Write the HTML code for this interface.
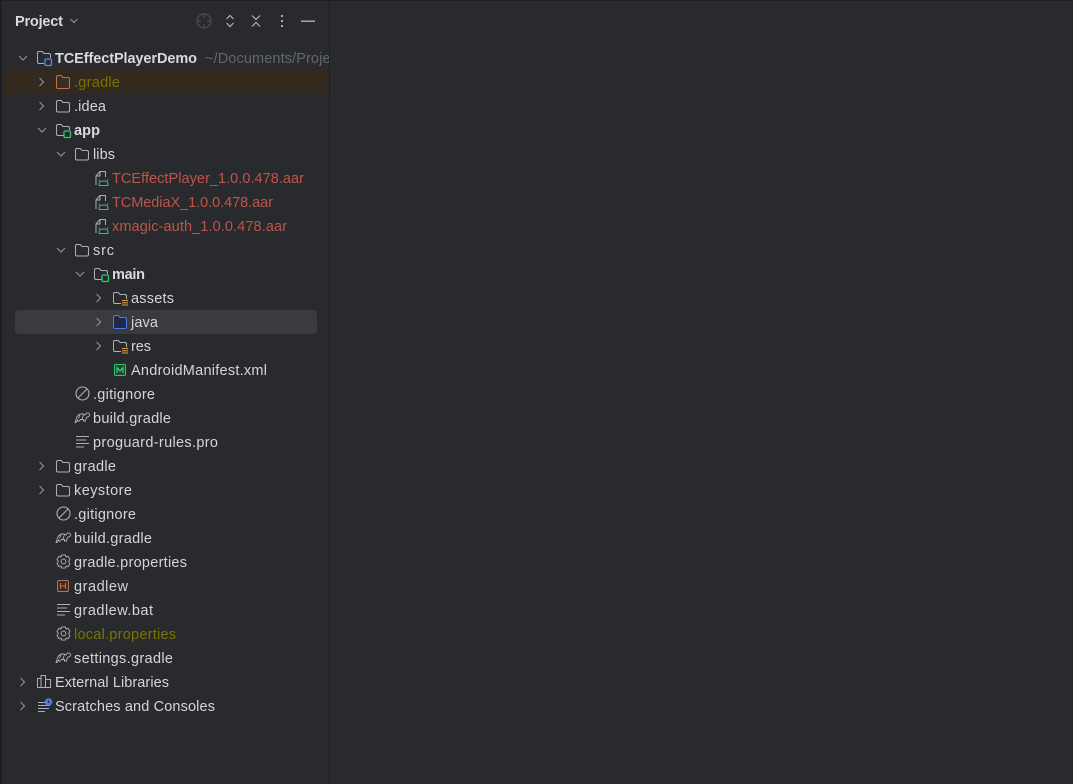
<!DOCTYPE html>
<html>
<head>
<meta charset="utf-8">
<style>
html,body{margin:0;padding:0;background:#292a2d;width:1073px;height:784px;overflow:hidden}
svg{display:block}
text{font-family:"Liberation Sans",sans-serif;font-size:14.5px;fill:#d3d5da}
.b{font-weight:bold;fill:#d8dade}
.r{fill:#bd5549}
.o{fill:#767600}
.g{fill:#64676d}
</style>
</head>
<body>
<svg width="1073" height="784" viewBox="0 0 1073 784" xmlns="http://www.w3.org/2000/svg">
<defs>
<clipPath id="cp"><rect x="0" y="0" width="329" height="784"/></clipPath>
<path id="cr" d="M-2.5 -4 L1.500 0 L-2.500 4" fill="none" stroke="#8b8e94" stroke-width="1.200"/>
<path id="cd" d="M-4 -2 L0 2 L4 -2" fill="none" stroke="#8b8e94" stroke-width="1.200"/>
<path id="f" d="M.5 2 Q.5 .5 2 .5 H5.200 L7 2.500 H12 Q13.500 2.500 13.500 4 V10.500 Q13.500 12 12 12 H2 Q.5 12 .5 10.500 Z" fill="none" stroke="#aeb0b6"/>
<g id="fm">
<path d="M7.500 11.500 H2 Q.5 11.500 .5 10 V2 Q.5 .5 2 .5 H5.200 L7 2.500 H12 Q13.500 2.500 13.500 4 V6" fill="none" stroke="#aeb0b6"/>
<rect x="8" y="7" width="6.500" height="6.500" rx="1.300" fill="none" stroke="#2fc66b" stroke-width="1.300"/>
</g>
<g id="fr">
<path d="M8 11.500 H2 Q.5 11.500 .5 10 V2 Q.5 .5 2 .5 H5.200 L7 2.500 H12 Q13.500 2.500 13.500 4 V7" fill="none" stroke="#aeb0b6"/>
<path d="M9 8.500 H15 M9 10.800 H15 M9 13 H15" stroke="#d9a343" stroke-width="1.100"/>
</g>
<g id="aar">
<path d="M1.500 13.500 H1 V5 L5 .5 H10.500 V6" fill="none" stroke="#aeb0b6"/>
<path d="M5 1 V5 H1" fill="none" stroke="#aeb0b6"/>
<path d="M4 14.500 V13 Q4 10 8.500 10 Q13 10 13 13 V14.500 Z M5 10 L4 8.500 M12 10 L13 8.500" fill="none" stroke="#3fb977" stroke-width="1"/>
</g>
<g id="ign">
<circle cx="7.500" cy="7.500" r="6.500" fill="none" stroke="#aeb0b6" stroke-width="1.100"/>
<path d="M3 12 L12 3" stroke="#aeb0b6" stroke-width="1.100"/>
</g>
<path id="el" d="M1 12.500 L2.500 8 Q3.500 4.500 7 4 Q9.500 3.500 11 5 L12.500 3 Q15.500 2.500 15.500 4.500 Q15.500 7 13 7 L12 9 L11.500 11 H9.500 L9.500 9.500 H6.500 L5.500 11 H3.500 L3.800 9.500 L2 12.500 Z M6 4.500 L4.500 8.500 M9.500 4.500 L8 9" fill="none" stroke="#aeb0b6" stroke-width=".9"/>
<g id="lines"><path d="M1 2.500 H14 M1 6 H11 M1 9.500 H14 M1 13 H9" stroke="#aeb0b6" stroke-width="1"/></g>
<g id="gear">
<path d="M5.500 1 H9.500 L10 3 L12 2.300 L14 5.500 L12.600 7.500 L14 9.500 L12 12.700 L10 12 L9.500 14 H5.500 L5 12 L3 12.700 L1 9.500 L2.400 7.500 L1 5.500 L3 2.300 L5 3 Z" fill="none" stroke="#a6a8ae" stroke-linejoin="round"/>
<circle cx="7.500" cy="7.500" r="2.400" fill="none" stroke="#a6a8ae"/>
</g>
</defs>

<rect width="1073" height="784" fill="#292a2d"/>
<rect x="0" y="0" width="1073" height="1" fill="#1d1e20"/>
<rect x="0" y="0" width="2" height="784" fill="#1d1e20"/>
<rect x="329" y="0" width="1" height="784" fill="#1d1e20"/>

<rect x="3" y="70" width="326" height="24" fill="#33291e"/>
<rect x="15" y="310" width="302" height="24" rx="4" fill="#393b40"/>

<g clip-path="url(#cp)">
<text x="15" y="26" class="b" textLength="48" lengthAdjust="spacing">Project</text>
<path d="M70.500 19 L74 22.500 L77.500 19" fill="none" stroke="#8b8e94" stroke-width="1.200"/>

<g fill="none" stroke="#4b4d52" stroke-width="1.200">
<circle cx="204" cy="21" r="7"/>
<path d="M204 14 V18 M204 24 V28 M197 21 H201 M207 21 H211"/>
</g>
<path d="M226.500 19 L230 15.500 L233.500 19 M226.500 23 L230 26.500 L233.500 23" fill="none" stroke="#aeb0b6" stroke-width="1.200"/>
<path d="M252 15.500 L256 19.500 L260 15.500 M252 26.500 L256 22.500 L260 26.500" fill="none" stroke="#aeb0b6" stroke-width="1.200"/>
<g fill="#aeb0b6"><rect x="281" y="15" width="2" height="2"/><rect x="281" y="20" width="2" height="2"/><rect x="281" y="25" width="2" height="2"/></g>
<rect x="301" y="20.500" width="14" height="1.400" fill="#aeb0b6"/>

<!-- row 0 -->
<use href="#cd" x="23" y="58"/>
<path d="M44 63.500 H39 Q37.500 63.500 37.500 62 V53 Q37.500 51.500 39 51.500 H42.200 L44 53.500 H49 Q50.500 53.500 50.500 55 V58" fill="none" stroke="#aeb0b6"/>
<rect x="45" y="59" width="6.500" height="6.500" rx="1.300" fill="none" stroke="#548af7" stroke-width="1.300"/>
<text x="55" y="63" class="b" textLength="142" lengthAdjust="spacing">TCEffectPlayerDemo</text>
<text x="205" y="63" class="g" textLength="125.500" lengthAdjust="spacing">~/Documents/Proje</text>

<!-- .gradle -->
<use href="#cr" x="42" y="82"/>
<path d="M56.500 77 Q56.500 75.500 58 75.500 H61.200 L63 77.500 H68 Q69.500 77.500 69.500 79 V87 Q69.500 88.500 68 88.500 H58 Q56.500 88.500 56.500 87 Z" fill="#3a2c25" stroke="#b9744f"/>
<text x="74" y="87" class="o" textLength="46" lengthAdjust="spacing">.gradle</text>

<!-- .idea -->
<use href="#cr" x="42" y="106"/>
<use href="#f" x="56" y="100"/>
<text x="74" y="111" textLength="32" lengthAdjust="spacing">.idea</text>

<!-- app -->
<use href="#cd" x="42" y="130"/>
<use href="#fm" x="56" y="124"/>
<text x="74" y="135" class="b" textLength="26" lengthAdjust="spacing">app</text>

<!-- libs -->
<use href="#cd" x="61" y="154"/>
<use href="#f" x="75" y="148"/>
<text x="93" y="159" textLength="22" lengthAdjust="spacing">libs</text>

<use href="#aar" x="95" y="171"/>
<text x="112" y="183" class="r" textLength="192" lengthAdjust="spacing">TCEffectPlayer_1.0.0.478.aar</text>
<use href="#aar" x="95" y="195"/>
<text x="112" y="207" class="r" textLength="161" lengthAdjust="spacing">TCMediaX_1.0.0.478.aar</text>
<use href="#aar" x="95" y="219"/>
<text x="112" y="231" class="r" textLength="175" lengthAdjust="spacing">xmagic-auth_1.0.0.478.aar</text>

<!-- src -->
<use href="#cd" x="61" y="250"/>
<use href="#f" x="75" y="244"/>
<text x="93" y="255" textLength="21" lengthAdjust="spacing">src</text>

<!-- main -->
<use href="#cd" x="80" y="274"/>
<use href="#fm" x="94" y="268"/>
<text x="112" y="279" class="b" textLength="33" lengthAdjust="spacing">main</text>

<!-- assets -->
<use href="#cr" x="99" y="298"/>
<use href="#fr" x="113" y="292"/>
<text x="131" y="303" textLength="43" lengthAdjust="spacing">assets</text>

<!-- java -->
<use href="#cr" x="99" y="322"/>
<path d="M113.500 317 Q113.500 315.500 115 315.500 H118.200 L120 317.500 H125 Q126.500 317.500 126.500 319 V327 Q126.500 328.500 125 328.500 H115 Q113.500 328.500 113.500 327 Z" fill="#212a44" stroke="#4b7be8"/>
<text x="131" y="327" textLength="27" lengthAdjust="spacing">java</text>

<!-- res -->
<use href="#cr" x="99" y="346"/>
<use href="#fr" x="113" y="340"/>
<text x="131" y="351" textLength="20" lengthAdjust="spacing">res</text>

<!-- manifest -->
<rect x="114.500" y="364.500" width="11" height="11" rx="1" fill="#1f4a30" stroke="#2fc66b"/>
<path d="M117 373 V367.500 L120 371 L123 367.500 V373" fill="none" stroke="#46d583" stroke-width="1.100"/>
<text x="131" y="375" textLength="136" lengthAdjust="spacing">AndroidManifest.xml</text>

<use href="#ign" x="75" y="386"/>
<text x="93" y="399" textLength="62" lengthAdjust="spacing">.gitignore</text>
<use href="#el" x="74" y="410"/>
<text x="93" y="423" textLength="78" lengthAdjust="spacing">build.gradle</text>
<use href="#lines" x="75" y="434"/>
<text x="93" y="447" textLength="125" lengthAdjust="spacing">proguard-rules.pro</text>

<use href="#cr" x="42" y="466"/>
<use href="#f" x="56" y="460"/>
<text x="74" y="471" textLength="42" lengthAdjust="spacing">gradle</text>

<use href="#cr" x="42" y="490"/>
<use href="#f" x="56" y="484"/>
<text x="74" y="495" textLength="58" lengthAdjust="spacing">keystore</text>

<use href="#ign" x="56" y="506"/>
<text x="74" y="519" textLength="62" lengthAdjust="spacing">.gitignore</text>
<use href="#el" x="55" y="530"/>
<text x="74" y="543" textLength="78" lengthAdjust="spacing">build.gradle</text>
<use href="#gear" x="56" y="554"/>
<text x="74" y="567" textLength="113" lengthAdjust="spacing">gradle.properties</text>

<rect x="57.500" y="580.500" width="11" height="11" rx="1.500" fill="#3a2c25" stroke="#b9744f"/>
<path d="M60.500 583 V589 M65.500 583 V589 M60.500 586 H65.500" fill="none" stroke="#b9744f" stroke-width="1.100"/>
<text x="74" y="591" textLength="54" lengthAdjust="spacing">gradlew</text>

<use href="#lines" x="56" y="602"/>
<text x="74" y="615" textLength="79" lengthAdjust="spacing">gradlew.bat</text>
<use href="#gear" x="56" y="626"/>
<text x="74" y="639" class="o" textLength="102" lengthAdjust="spacing">local.properties</text>
<use href="#el" x="55" y="650"/>
<text x="74" y="663" textLength="99" lengthAdjust="spacing">settings.gradle</text>

<use href="#cr" x="23" y="682"/>
<path d="M37.500 687.500 V678.500 H41 V687.500 M41 687.500 V675.500 H45.500 V687.500 M45.500 687.500 V679.500 H50.500 V687.500 H37.500" fill="none" stroke="#aeb0b6"/>
<text x="55" y="687" textLength="114" lengthAdjust="spacing">External Libraries</text>

<use href="#cr" x="23" y="706"/>
<path d="M38 702.500 H46 M38 705.500 H50 M38 708.500 H49 M38 711.500 H45" stroke="#aeb0b6" stroke-width="1"/>
<circle cx="48.500" cy="702" r="3.800" fill="#4b7be8"/>
<path d="M48.500 700 V702.300 H50" fill="none" stroke="#292a2d" stroke-width=".8"/>
<text x="55" y="711" textLength="160" lengthAdjust="spacing">Scratches and Consoles</text>
</g>
</svg>
</body>
</html>
